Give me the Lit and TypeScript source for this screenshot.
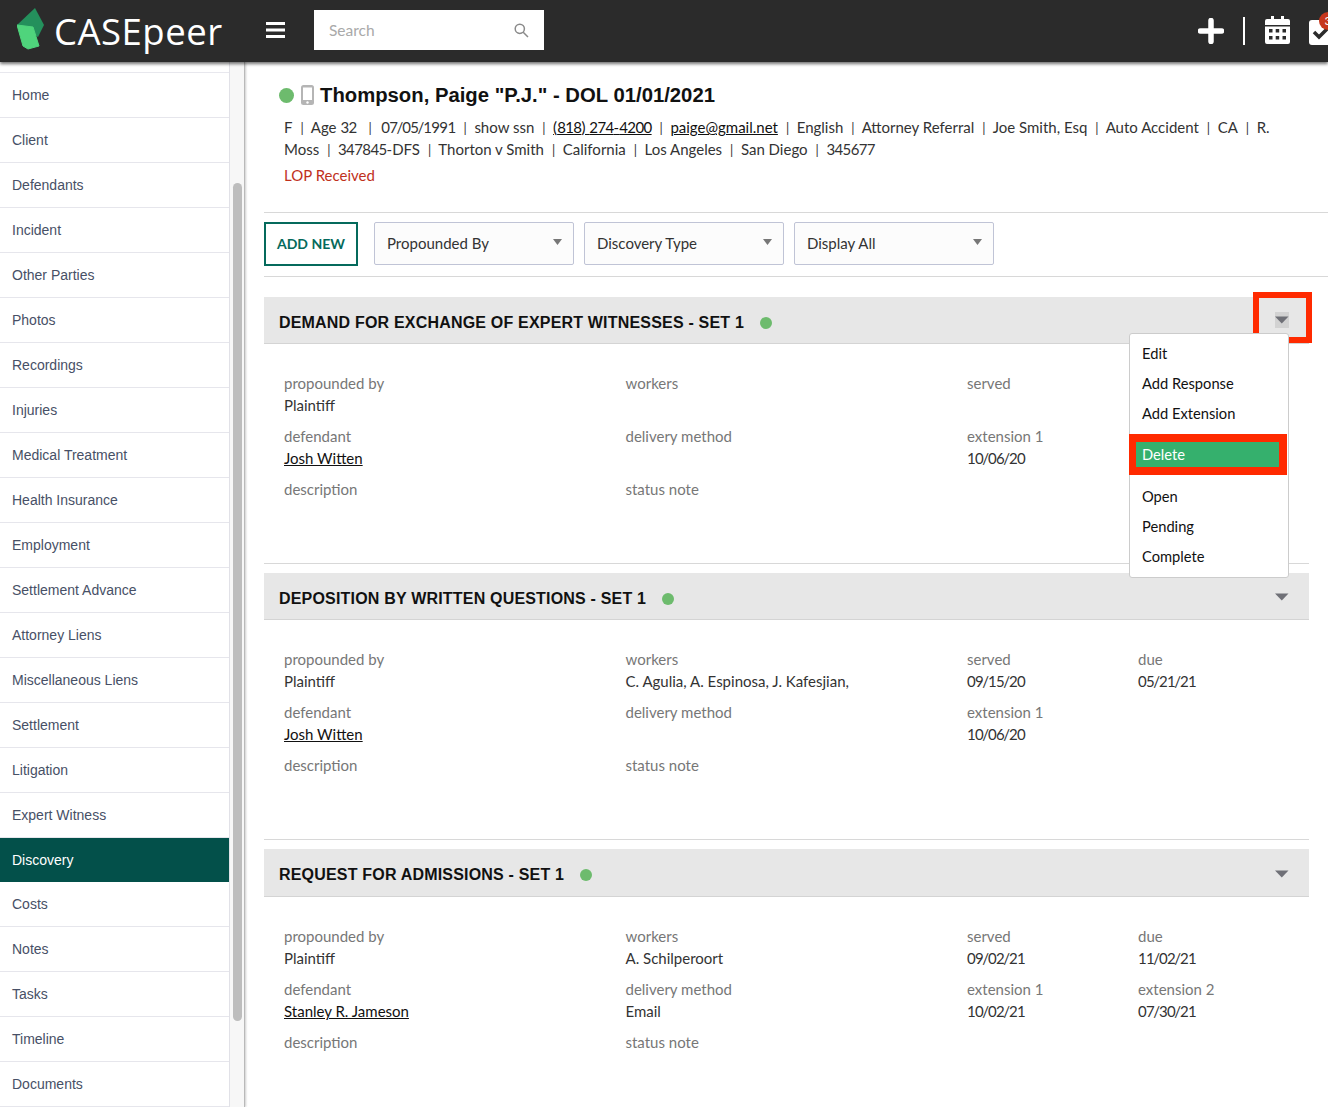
import { LitElement, html, css, svg } from "lit";
import { customElement } from "lit/decorators.js";

const NAV = ["Home","Client","Defendants","Incident","Other Parties","Photos","Recordings","Injuries","Medical Treatment","Health Insurance","Employment","Settlement Advance","Attorney Liens","Miscellaneous Liens","Settlement","Litigation","Expert Witness","Discovery","Costs","Notes","Tasks","Timeline","Documents"];
const META1 = ["F","Age 32","07/05/1991","show ssn","@(818) 274-4200","@paige@gmail.net","English","Attorney Referral","Joe Smith, Esq","Auto Accident","CA","R. Moss","347845-DFS","Thorton v Smith","California","Los Angeles","San Diego","345677"];

interface Card { title: string; open?: boolean; workers: string; served: string; due: string; def: string; method: string; ext1: string; ext2: string; }
const CARDS: Card[] = [
  { title: "DEMAND FOR EXCHANGE OF EXPERT WITNESSES - SET 1", open: true, workers: "", served: "", due: "", def: "Josh Witten", method: "", ext1: "10/06/20", ext2: "" },
  { title: "DEPOSITION BY WRITTEN QUESTIONS - SET 1", workers: "C. Agulia, A. Espinosa, J. Kafesjian,", served: "09/15/20", due: "05/21/21", def: "Josh Witten", method: "", ext1: "10/06/20", ext2: "" },
  { title: "REQUEST FOR ADMISSIONS - SET 1", workers: "A. Schilperoort", served: "09/02/21", due: "11/02/21", def: "Stanley R. Jameson", method: "Email", ext1: "10/02/21", ext2: "07/30/21" },
];

// The reference face has tighter figures and slashes than Lato: tighten just those runs.
function tight(text: string) {
  return text.split(/(\d+|\/)/).map((part) =>
    part === "/" ? html`<span class="sl">/</span>` : /^\d+$/.test(part) ? html`<span class="dg">${part}</span>` : part);
}

@customElement("app-root")
export class AppRoot extends LitElement {
  static styles = css`
    :host { display: block; height: 1107px; overflow: hidden; background: #fff; font-family: "Lato", "Liberation Sans", sans-serif; color: #333; position: relative; }
    * { box-sizing: border-box; }
    .dg { letter-spacing: -.6px; }
    .sl { margin: 0 -1px; }
    .top { height: 62px; background: #2b2b2b; display: flex; align-items: center; position: relative; z-index: 2; box-shadow: 0 2px 3px rgba(0,0,0,.55); overflow: hidden; }
    .logo { margin-left: 17px; width: 30px; height: 44px; flex: none; margin-bottom: 2px; }
    .brand { font-family: "Open Sans", sans-serif; color: #fff; font-size: 36.500px; margin-left: 7px; width: 170px; flex: none; letter-spacing: .5px; line-height: 62px; white-space: nowrap; }
    .burger { margin-left: 42px; flex: none; display: block; margin-bottom: 2px; }
    .search { margin: 0 0 2px 29px; width: 230px; height: 40px; background: #fff; display: flex; align-items: center; justify-content: space-between; padding: 0 15px; color: #a9a9a9; font-size: 15.500px; flex: none; }
    .tools { margin-left: auto; display: flex; align-items: center; flex: none; width: 130px; height: 62px; }
    .tools svg { display: block; flex: none; }
    .plus { margin-left: 0; }
    .vbar { width: 2px; height: 28px; background: #fff; margin: 0 20px 0 19px; flex: none; }
    .cal { margin-bottom: 2px; }
    .check { margin-left: 19px; position: relative; width: 19px; height: 62px; flex: none; }
    .check svg { position: absolute; left: 0; top: 20px; }
    .badge { position: absolute; left: 10px; top: 12px; width: 18px; height: 18px; border-radius: 50%; background: #c6361c; color: #fff; font-size: 12px; line-height: 18px; text-align: center; }

    .body { display: flex; height: 1045px; }
    .side { width: 230px; flex: none; padding-top: 10px; font-family: "Liberation Sans", sans-serif; font-size: 14px; color: #475066; border-right: 1px solid #e4e4ea; }
    .nav-list { border-top: 1px solid #e8e8ee; }
    .nav { height: 45px; display: flex; align-items: center; padding-left: 12px; border-bottom: 1px solid #e6e6ec; }
    .nav.on { height: 44px; background: #03504a; color: #fff; border-bottom: 0; }
    .track { width: 15px; flex: none; background: #f7f7f7; padding: 121px 0 0 3px; border-right: 1px solid #b9b9b9; box-shadow: 1px 0 2px rgba(0,0,0,.2); }
    .thumb { width: 9px; height: 838px; background: #bdbdbd; border-radius: 5px; }

    .main { flex: 1; min-width: 0; padding-top: 19px; }
    .head { height: 131px; padding-left: 34px; }
    .title { display: flex; align-items: center; height: 28px; font-family: "Liberation Sans", sans-serif; font-weight: 700; font-size: 20.300px; color: #111; white-space: nowrap; }
    .dot { width: 15px; height: 15px; border-radius: 50%; background: #6dbb6d; flex: none; }
    .phone { margin: 0 6px 0 7px; flex: none; }
    .meta { margin: 8px 0 0 5px; font-size: 15px; line-height: 21px; color: #333; width: 992px; }
    .meta .s { margin: 0 3.700px 0 8px; font-size: 13px; }
    .meta .s.wide { margin-left: 12px; margin-right: 5.500px; }
    .meta u { text-decoration: underline; color: #111; }
    .lop { margin: 4px 0 0 5px; color: #c0301c; font-size: 15px; line-height: 21px; }
    .bar { margin-left: 19px; height: 65px; border-top: 1px solid #d8d8d8; border-bottom: 1px solid #d8d8d8; display: flex; gap: 10px; padding-top: 9px; }
    .add { width: 94px; height: 44px; border: 2px solid #056a5c; color: #056a5c; font-weight: 700; font-size: 14px; display: flex; align-items: center; justify-content: center; margin-right: 6px; padding-bottom: 2px; }
    .sel { width: 200px; height: 43px; background: #fcfcfc; border: 1px solid #c0c4d6; border-radius: 2px; display: flex; justify-content: space-between; padding: 0 11px 2px 12px; align-items: center; font-size: 15px; color: #333; }
    .sel svg { align-self: flex-start; margin-top: 16px; }
    .cards { margin: 20px 19px 0 19px; }
    .card { height: 267px; border-bottom: 1px solid #d8d8d8; margin-bottom: 9px; position: relative; }
    .card:last-child { border-bottom: 0; }
    .chead { height: 47px; background: #e7e7e7; border-bottom: 1px solid #d4d4d4; display: flex; align-items: center; padding: 5px 20px 0 15px; font-family: "Liberation Sans", sans-serif; font-weight: 700; font-size: 16px; letter-spacing: .19px; color: #111; white-space: nowrap; }
    .card:last-child .chead { height: 48px; }
    .chead .dot { width: 12px; height: 12px; margin-left: 16px; }
    .caret { margin: 0 0 3px auto; display: block; }
    .caretbox { margin: 0 0 5px auto; width: 14px; height: 16px; background: #d2d2d2; display: flex; align-items: center; justify-content: center; }
    .caretbox .caret { margin: 0; }
    .grid { display: grid; grid-template-columns: 341.500px 341.500px 171px 1fr; padding: 28px 0 0 20px; font-size: 15px; line-height: 22px; grid-auto-rows: 53px; }
    .lab { color: #777; }
    .val { color: #333; }
    .val u { color: #111; }
    .hl { position: absolute; border: 6px solid #ff2a00; pointer-events: none; }
    .hl.a { left: 989px; top: -5px; width: 59px; height: 51px; }
    .menu { position: absolute; left: 865px; top: 36px; width: 160px; height: 245px; background: #fff; border: 1px solid #ccc; border-radius: 3px; z-index: 3; padding-top: 4px; font-size: 14.700px; color: #111; }
    .mi { height: 30px; line-height: 30px; padding-left: 12px; }
    .del { margin: 6px 0 6px -1px; width: 158px; height: 41px; border: 8px solid #ff2a00; border-left-width: 7px; background: #35b06d; color: #fff; line-height: 25px; padding-left: 6px; }
  `;

  private caret(color = "#6f7077") {
    return svg`<svg class="caret" width="14" height="8" viewBox="0 0 14 8"><path d="M0 .5h13.500L6.800 7.500z" fill="${color}"/></svg>`;
  }

  private field(label: string, value: string, link = false) {
    return html`<div><div class="lab">${label}</div>${value ? html`<div class="val">${link ? html`<u>${value}</u>` : tight(value)}</div>` : ""}</div>`;
  }

  private renderCard(c: Card) {
    return html`<section class="card">
      <div class="chead">${c.title}<span class="dot"></span>
        ${c.open ? html`<span class="caretbox">${this.caret()}</span>` : this.caret()}
      </div>
      <div class="grid">
        ${this.field("propounded by", "Plaintiff")}
        ${this.field("workers", c.workers)}
        ${this.field("served", c.served)}
        ${c.open ? html`<div></div>` : this.field("due", c.due)}
        ${this.field("defendant", c.def, true)}
        ${this.field("delivery method", c.method)}
        ${this.field("extension 1", c.ext1)}
        ${c.ext2 ? this.field("extension 2", c.ext2) : html`<div></div>`}
        ${this.field("description", "")}
        ${this.field("status note", "")}
      </div>
      ${c.open ? html`<div class="hl a"></div>
        <div class="menu">
          <div class="mi">Edit</div><div class="mi">Add Response</div><div class="mi">Add Extension</div>
          <div class="del">Delete</div>
          <div class="mi">Open</div><div class="mi">Pending</div><div class="mi">Complete</div>
        </div>` : ""}
    </section>`;
  }

  render() {
    return html`
      <header class="top">
        <svg class="logo" viewBox="0 0 30 44">
          <path d="M0 17 18 0l9 17-6 12z" fill="#24905c"/>
          <path d="M0 17l16 2 6 19-11 3-5-3z" fill="#4fd47c" stroke="#4fd47c" stroke-linejoin="round"/>
        </svg>
        <div class="brand">CASEpeer</div>
        <svg class="burger" width="19" height="16" viewBox="0 0 19 16"><path d="M0 1.500h19M0 8h19M0 14.500h19" stroke="#fff" stroke-width="3"/></svg>
        <div class="search">Search
          <svg width="15" height="15" viewBox="0 0 15 15" fill="none" stroke="#8a8a8a" stroke-width="1.500"><circle cx="5.800" cy="5.800" r="4.600"/><path d="M9.200 9.200 14 14"/></svg>
        </div>
        <div class="tools">
          <svg class="plus" width="26" height="26" viewBox="0 0 26 26"><path d="M13 2.500v21M2.500 13h21" stroke="#fff" stroke-width="5.500" stroke-linecap="round"/></svg>
          <span class="vbar"></span>
          <svg class="cal" width="25" height="28" viewBox="0 0 25 28">
            <path fill="#fff" d="M6 0h3v3h7V0h3v3h4a2 2 0 0 1 2 2v4H0V5a2 2 0 0 1 2-2h4zM0 10.500h25V26a2 2 0 0 1-2 2H2a2 2 0 0 1-2-2z"/>
            <g fill="#2b2b2b"><rect x="4" y="13" width="3.500" height="3.500"/><rect x="10.700" y="13" width="3.500" height="3.500"/><rect x="17.500" y="13" width="3.500" height="3.500"/><rect x="4" y="20" width="3.500" height="3.500"/><rect x="10.700" y="20" width="3.500" height="3.500"/><rect x="17.500" y="20" width="3.500" height="3.500"/></g>
          </svg>
          <div class="check">
            <svg width="24" height="25" viewBox="0 0 24 25"><rect width="24" height="25" rx="3" fill="#fff"/><path d="M5 12l5 5 9-9" stroke="#2b2b2b" stroke-width="3.500" fill="none"/></svg>
            <span class="badge">3</span>
          </div>
        </div>
      </header>
      <div class="body">
        <nav class="side"><div class="nav-list">
          ${NAV.map((n) => html`<div class="nav ${n === "Discovery" ? "on" : ""}">${n}</div>`)}
        </div></nav>
        <div class="track"><div class="thumb"></div></div>
        <main class="main">
          <div class="head">
            <div class="title"><span class="dot"></span>
              <svg class="phone" width="13" height="20" viewBox="0 0 13 20"><rect width="13" height="20" rx="2.500" fill="#b5b5b5"/><rect x="2" y="2.500" width="9" height="12.500" fill="#fff"/><circle cx="6.500" cy="17.500" r="1.200" fill="#fff"/></svg>
              Thompson, Paige "P.J." - DOL 01/01/2021
            </div>
            <div class="meta">${META1.map((m, i) => html`${m.startsWith("@") ? html`<u>${tight(m.slice(1))}</u>` : tight(m)}${i < META1.length - 1 ? html`<span class="s ${i === 1 ? "wide" : ""}">|</span> ` : ""}`)}</div>
            <div class="lop">LOP Received</div>
          </div>
          <div class="bar">
            <div class="add">ADD NEW</div>
            ${["Propounded By", "Discovery Type", "Display All"].map((s) => html`<div class="sel">${s}<svg width="9" height="6" viewBox="0 0 9 6"><path d="M0 0h9L4.500 6z" fill="#777"/></svg></div>`)}
          </div>
          <div class="cards">${CARDS.map((c) => this.renderCard(c))}</div>
        </main>
      </div>
    `;
  }
}
